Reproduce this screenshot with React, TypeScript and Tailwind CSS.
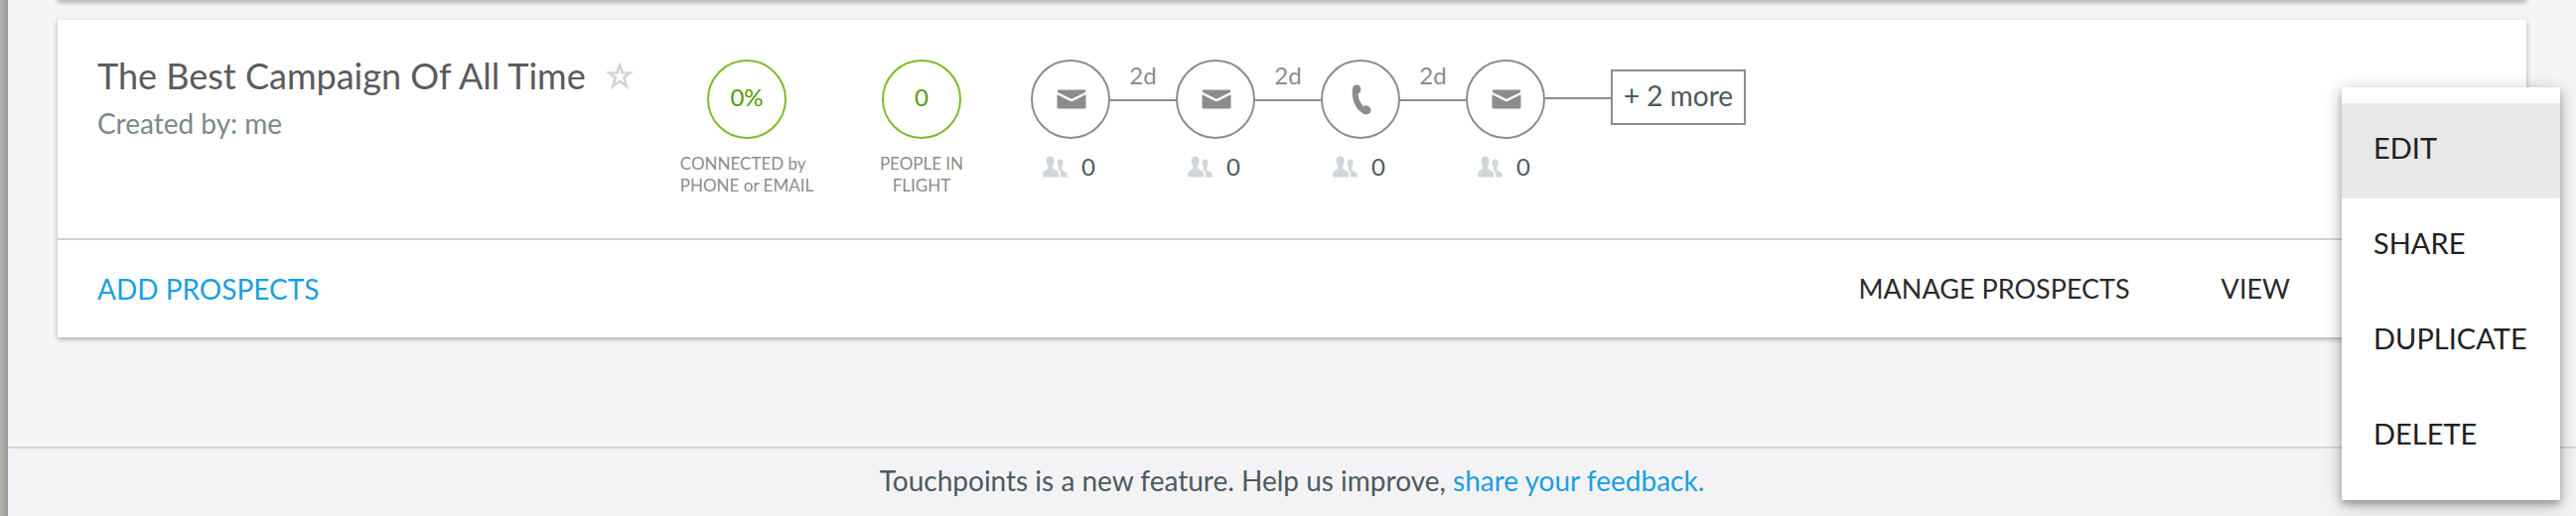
import { Fragment } from "react";

type StepType = "email" | "phone";

interface Step {
  id: number;
  type: StepType;
  people: number;
  wait?: string;
}

const steps: Step[] = [
  { id: 1, type: "email", people: 0, wait: "2d" },
  { id: 2, type: "email", people: 0, wait: "2d" },
  { id: 3, type: "phone", people: 0, wait: "2d" },
  { id: 4, type: "email", people: 0 },
];

const menuItems = ["EDIT", "SHARE", "DUPLICATE", "DELETE"];

const StarIcon = () => (
  <svg viewBox="0 0 28 28" className="w-7 h-7" fill="none" stroke="#d0d5d8" strokeWidth="2.6">
    <path d="M14 3.8 L16.6 11.2 L24.6 11.4 L18.3 16.2 L20.8 25 L14 19.8 L7.2 25 L9.7 16.2 L3.4 11.4 L11.4 11.2 Z" />
  </svg>
);

const EmailIcon = () => (
  <svg viewBox="0 0 30 20" className="w-[30px] h-5" fill="#8c8c8c">
    <path d="M1 .5 H29 V3 L15 9.8 L1 3 Z" />
    <path d="M.5 5.2 L15 12.6 L29.5 5.2 V18 Q29.5 19.5 28 19.5 H2 Q.5 19.5 .5 18 Z" />
  </svg>
);

const PhoneIcon = () => (
  <svg viewBox="0 0 20 31" className="w-5 h-[31px]" fill="#8c8c8c">
    <path d="M4.6 .6 C7.4 .2 9.3 2 9.3 4.7 C9.3 7.1 8.5 8.8 6.6 9.3 C6.6 14.2 8.6 18.6 12 22.2 C13.3 21 15.6 21.1 17.5 22.5 C19.7 24.2 20.1 26.5 18.7 28.4 C17.2 30.3 14.8 31 12.2 29.7 C5 25.6 .6 17.6 .7 7.4 C.8 3.2 1.8 1 4.6 .6 Z" />
  </svg>
);

const PeopleIcon = () => (
  <svg viewBox="0 0 25 22" className="w-[25px] h-[22px]" fill="#d0d6d9">
    <path d="M7.5 .5 C10.2 .5 11.8 2.4 11.6 5.2 C11.5 7 11.1 8.6 10.2 9.8 V12.6 C10.4 14.2 16.2 14.8 16.2 18.2 V21.5 H.3 V18.2 C.3 14.8 5 14.2 5.2 12.6 V9.8 C4.2 8.6 3.7 7 3.6 5.2 C3.4 2.4 4.8 .5 7.5 .5 Z" />
    <path d="M17.6 3.6 C19.7 3.6 20.6 5.2 20.5 7.4 C20.4 9 20 10 19.4 10.8 V14.2 C19.6 15.6 24.7 16 24.7 19 V21.5 H18 V18.2 C18 16 16.9 14.8 15 13.8 C16 13.4 16.2 12.4 16 10.8 C15.2 10 14.8 9 14.7 7.4 C14.6 5.2 15.5 3.6 17.6 3.6 Z" />
  </svg>
);

const StatCircle = ({ value }: { value: string }) => (
  <div className="flex items-center justify-center w-20 h-20 pb-1 rounded-full border-2 border-[#7dbb28] text-2xl text-[#559c00]">
    {value}
  </div>
);

const StepNode = ({ step }: { step: Step }) => (
  <div className="w-20">
    <div className="flex items-center justify-center w-20 h-20 pl-0.5 rounded-full border-2 border-[#8c8c8c]">
      {step.type === "email" ? <EmailIcon /> : <PhoneIcon />}
    </div>
    <div className="flex items-center gap-3.5 mt-3 pl-3 text-2xl text-[#4d5a5e]">
      <PeopleIcon />
      <span>{step.people}</span>
    </div>
  </div>
);

const CampaignCard = () => (
  <section className="bg-white shadow-[0_2px_5px_rgba(0,0,0,0.3)]">
    <div className="flex items-start h-[222px] pt-10 pl-10 border-b-2 border-[#d4d4d4]">
      <div className="w-[587px]">
        <div className="flex items-center gap-5">
          <h2 className="text-4xl leading-8 text-[#5b5b5b]">The Best Campaign Of All Time</h2>
          <button type="button" aria-label="Add to favorites">
            <StarIcon />
          </button>
        </div>
        <p className="mt-4 text-[28px] leading-8 text-[#7b888b]">Created by: me</p>
      </div>

      <div className="flex flex-col items-center w-[134px]">
        <StatCircle value="0%" />
        <p className="mt-3.5 text-[17px] leading-[22px] text-[#8c8c8c] whitespace-nowrap">
          CONNECTED by
          <br />
          PHONE or EMAIL
        </p>
      </div>

      <div className="flex flex-col items-center w-[100px] ml-[59px]">
        <StatCircle value="0" />
        <p className="mt-3.5 text-[17px] leading-[22px] text-center text-[#8c8c8c]">
          PEOPLE IN
          <br />
          FLIGHT
        </p>
      </div>

      <div className="flex items-start ml-15">
        {steps.map((step) => (
          <Fragment key={step.id}>
            <StepNode step={step} />
            <div
              className={`w-[66px] border-b-2 border-[#8c8c8c] text-2xl text-center text-[#8c8c8c] ${
                step.wait ? "h-[42px]" : "h-10"
              }`}
            >
              {step.wait}
            </div>
          </Fragment>
        ))}
        <button
          type="button"
          className="w-[136px] h-14 mt-2.5 pb-1 border-2 border-[#8c8c8c] text-[28px] text-[#4d5a5e] whitespace-nowrap"
        >
          + 2 more
        </button>
      </div>
    </div>

    <div className="flex items-center justify-between h-[98px] pl-10 pr-[238px]">
      <button type="button" className="text-[28px] text-[#1a9fe0]">
        ADD PROSPECTS
      </button>
      <div className="flex items-center gap-23 text-[27px] text-[#2b2b2b]">
        <button type="button">MANAGE PROSPECTS</button>
        <button type="button">VIEW</button>
      </div>
    </div>
  </section>
);

const CampaignMenu = () => (
  <ul
    role="menu"
    className="absolute top-22 right-4 w-[220px] py-4 bg-white shadow-[0_4px_16px_rgba(0,0,0,0.3),0_4px_6px_rgba(0,0,0,0.2)]"
  >
    {menuItems.map((item, i) => (
      <li key={item} role="none">
        <button
          type="button"
          role="menuitem"
          className={`block w-full h-24 pl-8 pb-1.5 text-left text-[29px] text-[#212121] ${i === 0 ? "bg-[#e8e8e8]" : ""}`}
        >
          {item}
        </button>
      </li>
    ))}
  </ul>
);

const App = () => {
  return (
    <div className="relative flex min-h-screen overflow-hidden bg-[#f5f5f5] font-['Lato',sans-serif]">
      <div className="w-2 bg-linear-to-r from-[#b4b5b0] to-[#979693]" />
      <div className="flex flex-col flex-1">
        <main className="flex-1 px-[50px]">
          {/* bottom edge of the previous card in the list */}
          <div className="flex flex-col h-5">
            <div className="h-1 -mt-1 bg-white shadow-[0_2px_5px_rgba(0,0,0,0.4)]" />
          </div>
          <CampaignCard />
        </main>
        <footer className="h-[70px] pt-3.5 border-t-2 border-[#d0d6d9] bg-[#f3f3f6] text-center text-[28px] leading-9 text-[#4d5a5e]">
          Touchpoints is a new feature. Help us improve,{" "}
          <a href="#feedback" className="text-[#1a9fe0]">
            share your feedback.
          </a>
        </footer>
      </div>
      <CampaignMenu />
    </div>
  );
};

export default App;
